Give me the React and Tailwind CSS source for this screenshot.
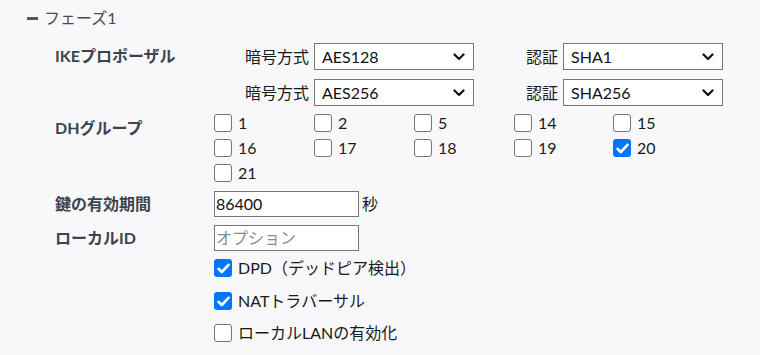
import React from "react";

const Box = ({ checked }) =>
  checked ? (
    <span className="w-[18px] h-[18px] rounded-[3px] bg-[#0075ff] flex items-center justify-center shrink-0">
      <svg width="13" height="11" viewBox="0 0 13 11">
        <path d="M1.5 5.8 L4.8 9 L11.5 1.8" fill="none" stroke="#fff" strokeWidth="2.6" strokeLinecap="round" strokeLinejoin="round" />
      </svg>
    </span>
  ) : (
    <span className="w-[18px] h-[18px] rounded-[3px] border-[1.5px] border-[#767676] bg-white shrink-0" />
  );

const Chk = ({ label, checked }) => (
  <div className="flex items-center gap-[6px] h-[18px] text-[#1a1a1a]">
    <Box checked={checked} />
    <span className="leading-[18px]">{label}</span>
  </div>
);

const Select = ({ value }) => (
  <div className="w-[160px] h-[27px] border border-[#767676] bg-white flex items-center justify-between pl-[7px] pr-[8px] text-[#111]">
    <span className="leading-[20px]">{value}</span>
    <svg width="12" height="8" viewBox="0 0 12 8">
      <path d="M1.5 1.5 L6 6 L10.5 1.5" fill="none" stroke="#111" strokeWidth="2.2" strokeLinecap="round" strokeLinejoin="round" />
    </svg>
  </div>
);

const Label = ({ children, className = "" }) => (
  <div className={"w-[159px] shrink-0 font-bold text-[#3b4450] leading-[24px] " + className}>{children}</div>
);

export default function App() {
  const dh = ["1", "2", "5", "14", "15", "16", "17", "18", "19", "20", "21"];
  return (
    <div className="w-[760px] h-[355px] bg-[#f8f8fa] font-['Lato','Noto_Sans_CJK_JP',sans-serif] text-[16px] overflow-hidden">
      <div className="pt-[8px] pl-[27px] flex items-center h-[28px] text-[#4a4a4a]">
        <span className="w-[11px] h-[3px] bg-[#555] mr-[6px]" />
        <span className="leading-[20px]">フェーズ1</span>
      </div>

      <div className="pl-[55px] mt-[15px] flex items-start">
        <Label className="mt-[1px]">IKEプロポーザル</Label>
        <div className="flex flex-col gap-[9px]">
          {[["AES128", "SHA1"], ["AES256", "SHA256"]].map(([a, b]) => (
            <div key={a} className="flex items-center text-[#1a1a1a]">
              <div className="w-[100px] text-right pr-[5px]">暗号方式</div>
              <Select value={a} />
              <div className="w-[89px] text-right pr-[5px]">認証</div>
              <Select value={b} />
            </div>
          ))}
        </div>
      </div>

      <div className="pl-[55px] mt-[8px] flex items-start">
        <Label className="mt-[2px]">DHグループ</Label>
        <div className="grid grid-cols-[100px_100px_100px_99px_100px] gap-y-[7px]">
          {dh.map((d) => (
            <Chk key={d} label={d} checked={d === "20"} />
          ))}
        </div>
      </div>

      <div className="pl-[55px] mt-[9px] flex items-center">
        <Label>鍵の有効期間</Label>
        <div className="w-[145px] h-[26px] border border-[#767676] bg-white flex items-center pl-[1px] text-[#111]">86400</div>
        <span className="ml-[3px] text-[#1a1a1a]">秒</span>
      </div>

      <div className="pl-[55px] mt-[8px] flex items-center">
        <Label>ローカルID</Label>
        <div className="w-[145px] h-[26px] border border-[#767676] bg-white flex items-center pl-[1px] text-[#8a8a8a]">オプション</div>
      </div>

      <div className="pl-[214px] mt-[8px] flex flex-col gap-[14px]">
        <Chk label="DPD（デッドピア検出）" checked />
        <div className="mt-[1px]">
          <Chk label="NATトラバーサル" checked />
        </div>
        <Chk label="ローカルLANの有効化" />
      </div>
    </div>
  );
}
